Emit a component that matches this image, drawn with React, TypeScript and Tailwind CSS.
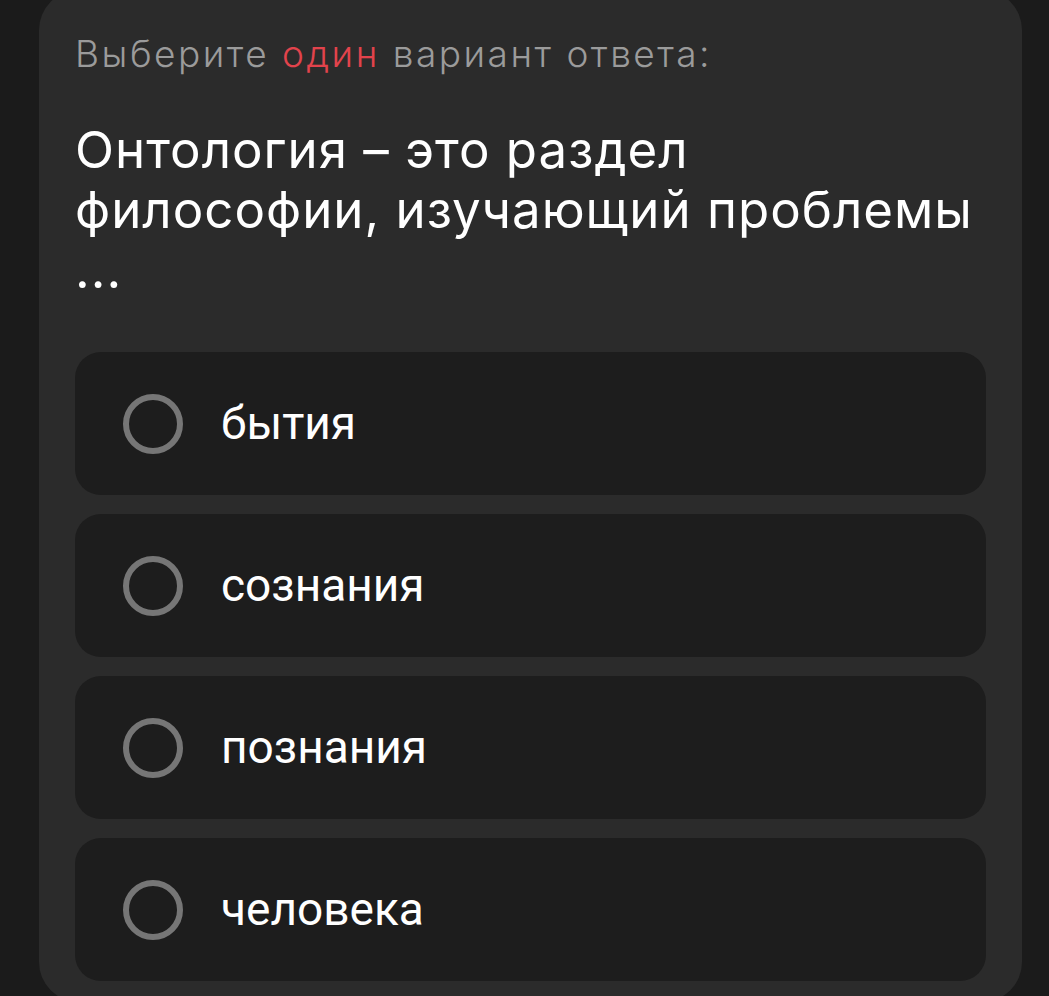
import React from 'react';

const options = ['бытия', 'сознания', 'познания', 'человека'];

const Radio: React.FC = () => (
  <span className="block h-[60px] w-[60px] shrink-0 rounded-full border-[6px] border-[#767676]" />
);

export default function App() {
  return (
    <div className="h-[996px] overflow-hidden bg-[#1b1b1b] px-[39px] pr-[27px]" style={{ fontFamily: 'Roboto, sans-serif' }}>
      <div className="-mt-[10px] min-h-[1012px] rounded-[40px] bg-[#2b2b2b] px-[36px] pt-[42px] pb-[20px]">
        <p className="font-['Inter',sans-serif] text-[37px] font-light leading-[44px] tracking-[2.5px] text-[#9b9b9b]">
          Выберите <span className="text-[#e2434c]">один</span> вариант ответа:
        </p>
        <h1 className="mt-[44px] font-['Inter',sans-serif] text-[51px] font-normal leading-[60px] tracking-[1px] text-white">
          Онтология – это раздел
          <br />
          философии, изучающий проблемы
          <br />
          ...
        </h1>
        <div className="mt-[52px] flex flex-col gap-[19px]">
          {options.map((o) => (
            <button
              key={o}
              className="flex h-[143px] items-center gap-[38px] rounded-[26px] bg-[#1d1d1d] pl-[48px] text-left"
            >
              <Radio />
              <span className="text-[46px] font-normal text-white">{o}</span>
            </button>
          ))}
        </div>
      </div>
    </div>
  );
}
